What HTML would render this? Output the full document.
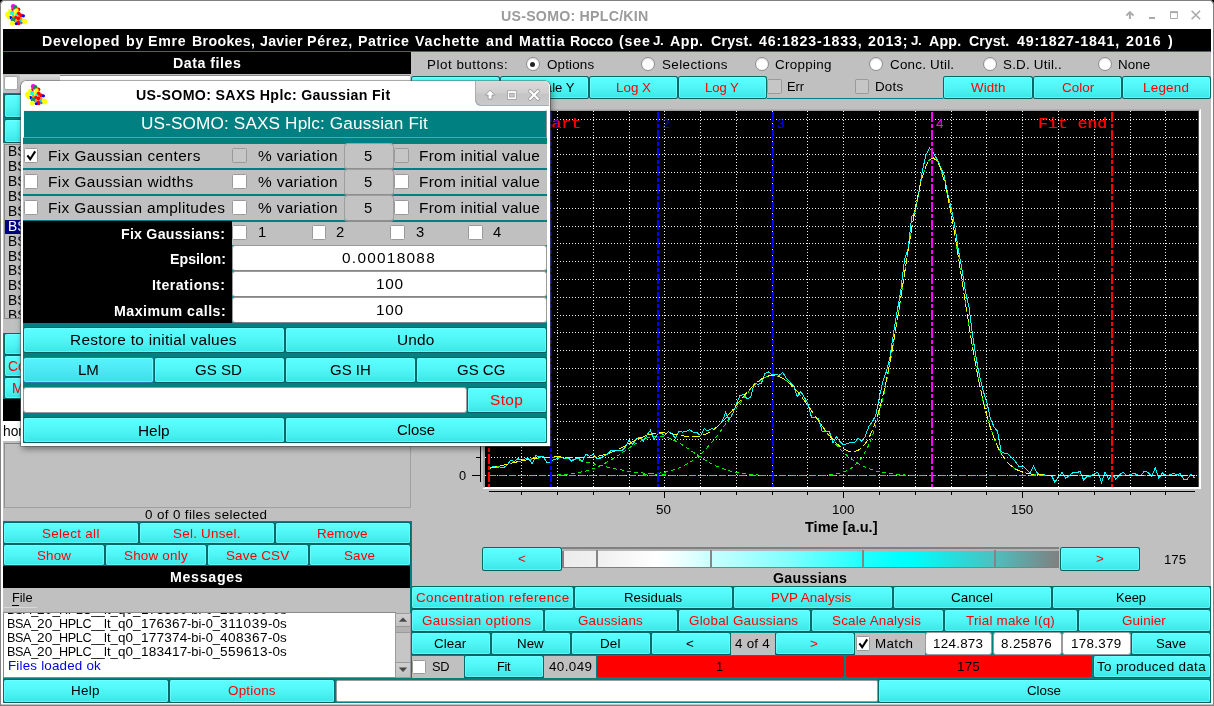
<!DOCTYPE html><html><head><meta charset="utf-8"><title>US-SOMO</title><style>html,body{margin:0;padding:0;background:#000;}
body{width:1214px;height:706px;position:relative;overflow:hidden;font-family:"Liberation Sans",sans-serif;}
body div{position:absolute;box-sizing:border-box;}
.t{white-space:nowrap;will-change:transform;}
.b{background:linear-gradient(#5cffff 0%,#50f6f6 50%,#3ce6e6 100%);border:1px solid #006a6a;border-bottom:1.5px solid #005f5f;border-radius:2.5px;box-shadow:inset 0 0 0 1px rgba(130,255,255,.55);}
</style></head><body>
<div class="" style="left:0px;top:0px;width:1214px;height:706px;background:#fff;border-radius:5px 5px 0 0;box-shadow:inset 0 0 0 1px #808080, inset 0 -0.4px 0 1px #808080;"></div>
<div class="" style="left:3px;top:29px;width:1208px;height:673.8px;background:#008080;"></div>
<div class="t" style="left:500.82px;top:8px;height:16px;line-height:16px;font-size:14.20px;color:#9b9b9b;letter-spacing:0.24px;font-weight:bold;">US-SOMO: HPLC/KIN</div>
<div class="" style="left:3px;top:29px;width:1208px;height:22px;background:#000;"></div>
<div class="t" style="left:41.65px;top:33px;height:16px;line-height:16px;font-size:14.20px;color:#fff;letter-spacing:0.71px;font-weight:bold;">Developed</div>
<div class="t" style="left:125.98px;top:33px;height:16px;line-height:16px;font-size:14.20px;color:#fff;letter-spacing:0.76px;font-weight:bold;">by</div>
<div class="t" style="left:148.16px;top:33px;height:16px;line-height:16px;font-size:14.20px;color:#fff;letter-spacing:0.72px;font-weight:bold;">Emre</div>
<div class="t" style="left:191.76px;top:33px;height:16px;line-height:16px;font-size:14.20px;color:#fff;letter-spacing:0.32px;font-weight:bold;">Brookes,</div>
<div class="t" style="left:259.64px;top:33px;height:16px;line-height:16px;font-size:14.20px;color:#fff;letter-spacing:0.29px;font-weight:bold;">Javier</div>
<div class="t" style="left:306.75px;top:33px;height:16px;line-height:16px;font-size:14.20px;color:#fff;letter-spacing:0.69px;font-weight:bold;">Pérez,</div>
<div class="t" style="left:358.09px;top:33px;height:16px;line-height:16px;font-size:14.20px;color:#fff;letter-spacing:0.58px;font-weight:bold;">Patrice</div>
<div class="t" style="left:415.01px;top:33px;height:16px;line-height:16px;font-size:14.20px;color:#fff;letter-spacing:0.82px;font-weight:bold;">Vachette</div>
<div class="t" style="left:485.88px;top:33px;height:16px;line-height:16px;font-size:14.20px;color:#fff;letter-spacing:0.75px;font-weight:bold;">and</div>
<div class="t" style="left:518.86px;top:33px;height:16px;line-height:16px;font-size:14.20px;color:#fff;letter-spacing:0.91px;font-weight:bold;">Mattia</div>
<div class="t" style="left:570.30px;top:33px;height:16px;line-height:16px;font-size:14.17px;color:#fff;font-weight:bold;">Rocco</div>
<div class="t" style="left:619.41px;top:33px;height:16px;line-height:16px;font-size:14.20px;color:#fff;letter-spacing:0.82px;font-weight:bold;">(see</div>
<div class="t" style="left:653.14px;top:33px;height:15px;line-height:15px;font-size:13.40px;color:#fff;letter-spacing:-0.35px;font-weight:bold;">J.</div>
<div class="t" style="left:669.96px;top:33px;height:16px;line-height:16px;font-size:14.20px;color:#fff;letter-spacing:0.51px;font-weight:bold;">App.</div>
<div class="t" style="left:710.51px;top:33px;height:16px;line-height:16px;font-size:14.20px;color:#fff;letter-spacing:0.23px;font-weight:bold;">Cryst.</div>
<div class="t" style="left:759.03px;top:33px;height:16px;line-height:16px;font-size:14.20px;color:#fff;letter-spacing:0.86px;font-weight:bold;">46:1823-1833,</div>
<div class="t" style="left:868.10px;top:33px;height:16px;line-height:16px;font-size:14.20px;color:#fff;letter-spacing:0.80px;font-weight:bold;">2013;</div>
<div class="t" style="left:910.89px;top:33px;height:15px;line-height:15px;font-size:13.40px;color:#fff;letter-spacing:-0.35px;font-weight:bold;">J.</div>
<div class="t" style="left:928.51px;top:33px;height:16px;line-height:16px;font-size:14.20px;color:#fff;letter-spacing:0.21px;font-weight:bold;">App.</div>
<div class="t" style="left:968.90px;top:33px;height:16px;line-height:16px;font-size:14.20px;color:#fff;font-weight:bold;">Cryst.</div>
<div class="t" style="left:1017.41px;top:33px;height:16px;line-height:16px;font-size:14.20px;color:#fff;letter-spacing:0.82px;font-weight:bold;">49:1827-1841,</div>
<div class="t" style="left:1126.00px;top:33px;height:16px;line-height:16px;font-size:14.20px;color:#fff;letter-spacing:1.00px;font-weight:bold;">2016</div>
<div class="t" style="left:1167.84px;top:33px;height:16px;line-height:16px;font-size:14.20px;color:#fff;letter-spacing:0.47px;font-weight:bold;">)</div>
<div class="" style="left:3px;top:52px;width:408px;height:22px;background:#000;"></div>
<div class="t" style="left:172.56px;top:55px;height:16px;line-height:16px;font-size:14.20px;color:#fff;letter-spacing:0.53px;font-weight:bold;">Data files</div>
<div class="" style="left:3px;top:74px;width:408.5px;height:447px;background:#c0c0c0;"></div>
<div class="" style="left:3.6px;top:76.2px;width:14px;height:14.1px;background:#fff;border:1px solid #a8a8a8;box-sizing:border-box;border-radius:2px;"></div>
<div class="" style="left:20px;top:75px;width:40px;height:22px;background:linear-gradient(#d8d8d8,#b0b0b0);"></div>
<div class="" style="left:60px;top:75px;width:350px;height:22px;background:#fff;border-top:1px solid #888;"></div>
<div class="" style="left:3px;top:93.4px;width:137px;height:50px;background:#008080;"></div>
<div class="b" style="left:3.5px;top:94px;width:136.5px;height:23.6px;"></div>
<div class="b" style="left:3.5px;top:118.7px;width:136.5px;height:24px;"></div>
<div class="" style="left:3.5px;top:144px;width:406.5px;height:174.5px;background:#c0c0c0;border:1px solid #8a8a8a;box-sizing:border-box;"></div>
<div style="left:4.5px;top:145px;width:400px;height:172.5px;overflow:hidden;">
<div class="t" style="left:3.00px;top:-1px;height:15px;line-height:15px;font-size:13.80px;color:#000;">BSA</div>
<div class="t" style="left:3.00px;top:14px;height:15px;line-height:15px;font-size:13.80px;color:#000;">BSA</div>
<div class="t" style="left:3.00px;top:29px;height:15px;line-height:15px;font-size:13.80px;color:#000;">BSA</div>
<div class="t" style="left:3.00px;top:44px;height:15px;line-height:15px;font-size:13.80px;color:#000;">BSA</div>
<div class="t" style="left:3.00px;top:59px;height:15px;line-height:15px;font-size:13.80px;color:#000;">BSA</div>
<div class="" style="left:0px;top:74.5px;width:396px;height:14.2px;background:#000080;"></div>
<div class="t" style="left:3.00px;top:74px;height:15px;line-height:15px;font-size:13.80px;color:#fff;">BSA</div>
<div class="t" style="left:3.00px;top:89px;height:15px;line-height:15px;font-size:13.80px;color:#000;">BSA</div>
<div class="t" style="left:3.00px;top:104px;height:15px;line-height:15px;font-size:13.80px;color:#000;">BSA</div>
<div class="t" style="left:3.00px;top:118px;height:15px;line-height:15px;font-size:13.80px;color:#000;">BSA</div>
<div class="t" style="left:3.00px;top:133px;height:15px;line-height:15px;font-size:13.80px;color:#000;">BSA</div>
<div class="t" style="left:3.00px;top:148px;height:15px;line-height:15px;font-size:13.80px;color:#000;">BSA</div>
<div class="t" style="left:3.00px;top:163px;height:15px;line-height:15px;font-size:13.80px;color:#000;">BSA</div>
</div>
<div class="" style="left:4px;top:320px;width:406px;height:12px;background:#c0c0c0;"></div>
<div class="" style="left:3px;top:332.5px;width:137px;height:67px;background:#008080;"></div>
<div class="b" style="left:3.5px;top:333px;width:136.5px;height:22px;"></div>
<div class="b" style="left:3.5px;top:355px;width:136.5px;height:22px;"></div>
<div class="t" style="left:7.50px;top:359px;height:15px;line-height:15px;font-size:13.80px;color:#ff0000;">Co</div>
<div class="b" style="left:3.5px;top:377px;width:136.5px;height:22px;"></div>
<div class="t" style="left:12.30px;top:381px;height:15px;line-height:15px;font-size:13.80px;color:#ff0000;">M</div>
<div class="" style="left:3px;top:399px;width:408px;height:22px;background:#000;"></div>
<div class="" style="left:3px;top:421px;width:408px;height:20px;background:#fff;"></div>
<div class="t" style="left:2.60px;top:424px;height:15px;line-height:15px;font-size:13.80px;color:#000;">hor</div>
<div class="" style="left:3px;top:441px;width:408.5px;height:80px;background:#c0c0c0;"></div>
<div class="" style="left:4px;top:443px;width:407px;height:65px;background:#c0c0c0;border:1px solid #a0a0a0;border-top-color:#808080;border-left-color:#909090;box-sizing:border-box;"></div>
<div class="t" style="left:145.48px;top:507px;height:15px;line-height:15px;font-size:13.40px;color:#000;letter-spacing:0.37px;">0 of 0 files selected</div>
<div class="" style="left:3px;top:521px;width:407px;height:46px;background:#008080;"></div>
<div class="b" style="left:3.4px;top:522px;width:135.6px;height:22px;"></div>
<div class="t" style="left:42.17px;top:526px;height:15px;line-height:15px;font-size:13.40px;color:#ff0000;letter-spacing:0.34px;">Select all</div>
<div class="b" style="left:139px;top:522px;width:136px;height:22px;"></div>
<div class="t" style="left:173.43px;top:526px;height:15px;line-height:15px;font-size:13.40px;color:#ff0000;letter-spacing:0.26px;">Sel. Unsel.</div>
<div class="b" style="left:275px;top:522px;width:136px;height:22px;"></div>
<div class="t" style="left:316.96px;top:526px;height:15px;line-height:15px;font-size:13.40px;color:#ff0000;letter-spacing:0.12px;">Remove</div>
<div class="b" style="left:3.4px;top:544px;width:101.6px;height:22px;"></div>
<div class="t" style="left:36.99px;top:548px;height:15px;line-height:15px;font-size:13.40px;color:#ff0000;letter-spacing:0.17px;">Show</div>
<div class="b" style="left:105px;top:544px;width:102px;height:22px;"></div>
<div class="t" style="left:124.22px;top:548px;height:15px;line-height:15px;font-size:13.40px;color:#ff0000;letter-spacing:0.23px;">Show only</div>
<div class="b" style="left:207px;top:544px;width:102px;height:22px;"></div>
<div class="t" style="left:226.39px;top:548px;height:15px;line-height:15px;font-size:13.40px;color:#ff0000;letter-spacing:0.19px;">Save CSV</div>
<div class="b" style="left:309px;top:544px;width:102px;height:22px;"></div>
<div class="t" style="left:344.37px;top:548px;height:15px;line-height:15px;font-size:13.40px;color:#ff0000;letter-spacing:0.14px;">Save</div>
<div class="" style="left:3px;top:566px;width:407px;height:22px;background:#000;"></div>
<div class="t" style="left:170.25px;top:569px;height:16px;line-height:16px;font-size:14.20px;color:#fff;letter-spacing:0.70px;font-weight:bold;">Messages</div>
<div class="" style="left:3px;top:588px;width:407px;height:24.5px;background:#c0c0c0;"></div>
<div class="t" style="left:11.98px;top:590px;height:15px;line-height:15px;font-size:12.80px;color:#000;letter-spacing:-0.03px;text-decoration:none;">File</div>
<div class="" style="left:12px;top:605px;width:7px;height:1px;background:#000;"></div>
<div class="" style="left:4px;top:606.5px;width:33px;height:1px;background:#d8d8d8;"></div>
<div class="" style="left:3px;top:612px;width:393px;height:66px;background:#fff;border:1px solid #8a8a8a;box-sizing:border-box;overflow:hidden;"></div>
<div style="position:absolute;left:4px;top:613px;width:391px;height:64px;overflow:hidden;">
<div class="t" style="left:3.17px;top:-10px;height:14px;line-height:14px;font-size:12.60px;color:#000;letter-spacing:-0.35px;">BSA_</div>
<div class="t" style="left:33.22px;top:-11px;height:15px;line-height:15px;font-size:13.60px;color:#000;letter-spacing:0.24px;">20_</div>
<div class="t" style="left:55.46px;top:-10px;height:14px;line-height:14px;font-size:12.60px;color:#000;letter-spacing:-0.35px;">HPLC__</div>
<div class="t" style="left:100.30px;top:-11px;height:15px;line-height:15px;font-size:13.07px;color:#000;">lt_</div>
<div class="t" style="left:114.10px;top:-11px;height:15px;line-height:15px;font-size:13.43px;color:#000;">q0_</div>
<div class="t" style="left:136.59px;top:-11px;height:15px;line-height:15px;font-size:13.60px;color:#000;letter-spacing:0.19px;">175360</div>
<div class="t" style="left:183.00px;top:-11px;height:15px;line-height:15px;font-size:12.91px;color:#000;">-bi-0_</div>
<div class="t" style="left:216.23px;top:-11px;height:15px;line-height:15px;font-size:13.60px;color:#000;letter-spacing:0.45px;">286460</div>
<div class="t" style="left:264.10px;top:-11px;height:15px;line-height:15px;font-size:13.46px;color:#000;">-0s</div>
<div class="t" style="left:3.17px;top:4px;height:14px;line-height:14px;font-size:12.60px;color:#000;letter-spacing:-0.35px;">BSA_</div>
<div class="t" style="left:33.22px;top:3px;height:15px;line-height:15px;font-size:13.60px;color:#000;letter-spacing:0.24px;">20_</div>
<div class="t" style="left:55.46px;top:4px;height:14px;line-height:14px;font-size:12.60px;color:#000;letter-spacing:-0.35px;">HPLC__</div>
<div class="t" style="left:100.30px;top:3px;height:15px;line-height:15px;font-size:13.07px;color:#000;">lt_</div>
<div class="t" style="left:114.10px;top:3px;height:15px;line-height:15px;font-size:13.43px;color:#000;">q0_</div>
<div class="t" style="left:136.59px;top:3px;height:15px;line-height:15px;font-size:13.60px;color:#000;letter-spacing:0.19px;">176367</div>
<div class="t" style="left:183.00px;top:3px;height:15px;line-height:15px;font-size:12.91px;color:#000;">-bi-0_</div>
<div class="t" style="left:216.31px;top:3px;height:15px;line-height:15px;font-size:13.60px;color:#000;letter-spacing:0.62px;">311039</div>
<div class="t" style="left:264.10px;top:3px;height:15px;line-height:15px;font-size:13.46px;color:#000;">-0s</div>
<div class="t" style="left:3.17px;top:18px;height:14px;line-height:14px;font-size:12.60px;color:#000;letter-spacing:-0.35px;">BSA_</div>
<div class="t" style="left:33.22px;top:17px;height:15px;line-height:15px;font-size:13.60px;color:#000;letter-spacing:0.24px;">20_</div>
<div class="t" style="left:55.46px;top:18px;height:14px;line-height:14px;font-size:12.60px;color:#000;letter-spacing:-0.35px;">HPLC__</div>
<div class="t" style="left:100.30px;top:17px;height:15px;line-height:15px;font-size:13.07px;color:#000;">lt_</div>
<div class="t" style="left:114.10px;top:17px;height:15px;line-height:15px;font-size:13.43px;color:#000;">q0_</div>
<div class="t" style="left:136.59px;top:17px;height:15px;line-height:15px;font-size:13.60px;color:#000;letter-spacing:0.19px;">177374</div>
<div class="t" style="left:183.00px;top:17px;height:15px;line-height:15px;font-size:12.91px;color:#000;">-bi-0_</div>
<div class="t" style="left:216.23px;top:17px;height:15px;line-height:15px;font-size:13.60px;color:#000;letter-spacing:0.45px;">408367</div>
<div class="t" style="left:264.10px;top:17px;height:15px;line-height:15px;font-size:13.46px;color:#000;">-0s</div>
<div class="t" style="left:3.17px;top:32px;height:14px;line-height:14px;font-size:12.60px;color:#000;letter-spacing:-0.35px;">BSA_</div>
<div class="t" style="left:33.22px;top:31px;height:15px;line-height:15px;font-size:13.60px;color:#000;letter-spacing:0.24px;">20_</div>
<div class="t" style="left:55.46px;top:32px;height:14px;line-height:14px;font-size:12.60px;color:#000;letter-spacing:-0.35px;">HPLC__</div>
<div class="t" style="left:100.30px;top:31px;height:15px;line-height:15px;font-size:13.07px;color:#000;">lt_</div>
<div class="t" style="left:114.10px;top:31px;height:15px;line-height:15px;font-size:13.43px;color:#000;">q0_</div>
<div class="t" style="left:136.59px;top:31px;height:15px;line-height:15px;font-size:13.60px;color:#000;letter-spacing:0.19px;">183417</div>
<div class="t" style="left:183.00px;top:31px;height:15px;line-height:15px;font-size:12.91px;color:#000;">-bi-0_</div>
<div class="t" style="left:216.23px;top:31px;height:15px;line-height:15px;font-size:13.60px;color:#000;letter-spacing:0.45px;">559613</div>
<div class="t" style="left:264.10px;top:31px;height:15px;line-height:15px;font-size:13.46px;color:#000;">-0s</div>
<div class="t" style="left:4.00px;top:45px;height:15px;line-height:15px;font-size:13.40px;color:#0000e0;letter-spacing:0.19px;">Files loaded ok</div>
</div>
<div class="" style="left:395.2px;top:612.5px;width:15.6px;height:65.1px;background:#c6c6c6;border-left:1px solid #9a9a9a;border-right:1px solid #9a9a9a;box-sizing:border-box;"></div>
<div class="" style="left:395.2px;top:612.5px;width:15.6px;height:14.7px;background:linear-gradient(#cfcfcf,#c2c2c2);border:1px solid #9a9a9a;box-sizing:border-box;"></div>
<div class="" style="left:395.2px;top:662.2px;width:15.6px;height:15.4px;background:linear-gradient(#cfcfcf,#c2c2c2);border:1px solid #9a9a9a;box-sizing:border-box;"></div>
<div class="" style="left:396px;top:627.4px;width:14px;height:6px;background:#b2b2b2;border-bottom:1px solid #9a9a9a;box-sizing:border-box;"></div>
<svg style="position:absolute;left:395px;top:612px" width="16" height="66"><path d="M3.8 9.8 L8 5.4 L12.2 9.8Z" fill="#484848"/><path d="M3.8 55.5 L8 60 L12.2 55.5Z" fill="#484848"/></svg>
<div class="" style="left:411px;top:586px;width:800px;height:117px;background:#008080;"></div>
<div class="b" style="left:3px;top:679px;width:166px;height:23.8px;"></div>
<div class="t" style="left:71.24px;top:683px;height:15px;line-height:15px;font-size:13.40px;color:#000;letter-spacing:0.29px;">Help</div>
<div class="b" style="left:169px;top:679px;width:166px;height:23.8px;"></div>
<div class="t" style="left:227.52px;top:683px;height:15px;line-height:15px;font-size:13.40px;color:#ff0000;letter-spacing:0.23px;">Options</div>
<div class="" style="left:335.5px;top:679.5px;width:542px;height:22.8px;background:#fff;border:1px solid #9a9a9a;box-sizing:border-box;border-radius:2px;"></div>
<div class="b" style="left:878px;top:679px;width:333px;height:23.8px;"></div>
<div class="t" style="left:1027.30px;top:683px;height:15px;line-height:15px;font-size:13.30px;color:#000;">Close</div>
<div class="" style="left:411px;top:52px;width:800px;height:24px;background:#c0c0c0;"></div>
<div class="t" style="left:427.26px;top:57px;height:15px;line-height:15px;font-size:13.40px;color:#000;letter-spacing:0.52px;">Plot buttons:</div>
<div class="" style="left:525.7px;top:57px;width:14px;height:14px;border-radius:50%;background:#fff;border:1px solid #8c8c8c;box-sizing:border-box;box-shadow:inset 0 1px 1px rgba(0,0,0,.15);"><div style="position:absolute;left:3.5px;top:3.5px;width:5px;height:5px;border-radius:50%;background:#222"></div></div>
<div class="t" style="left:546.78px;top:57px;height:15px;line-height:15px;font-size:13.40px;color:#000;letter-spacing:0.16px;">Options</div>
<div class="" style="left:640.8px;top:57px;width:14px;height:14px;border-radius:50%;background:#fff;border:1px solid #8c8c8c;box-sizing:border-box;box-shadow:inset 0 1px 1px rgba(0,0,0,.15);"></div>
<div class="t" style="left:661.51px;top:57px;height:15px;line-height:15px;font-size:13.40px;color:#000;letter-spacing:0.42px;">Selections</div>
<div class="" style="left:754.8px;top:57px;width:14px;height:14px;border-radius:50%;background:#fff;border:1px solid #8c8c8c;box-sizing:border-box;box-shadow:inset 0 1px 1px rgba(0,0,0,.15);"></div>
<div class="t" style="left:775.45px;top:57px;height:15px;line-height:15px;font-size:13.40px;color:#000;letter-spacing:0.29px;">Cropping</div>
<div class="" style="left:868.7px;top:57px;width:14px;height:14px;border-radius:50%;background:#fff;border:1px solid #8c8c8c;box-sizing:border-box;box-shadow:inset 0 1px 1px rgba(0,0,0,.15);"></div>
<div class="t" style="left:889.81px;top:57px;height:15px;line-height:15px;font-size:13.40px;color:#000;letter-spacing:0.23px;">Conc. Util.</div>
<div class="" style="left:982.7px;top:57px;width:14px;height:14px;border-radius:50%;background:#fff;border:1px solid #8c8c8c;box-sizing:border-box;box-shadow:inset 0 1px 1px rgba(0,0,0,.15);"></div>
<div class="t" style="left:1003.41px;top:57px;height:15px;line-height:15px;font-size:13.40px;color:#000;letter-spacing:0.22px;">S.D. Util..</div>
<div class="" style="left:1097.7px;top:57px;width:14px;height:14px;border-radius:50%;background:#fff;border:1px solid #8c8c8c;box-sizing:border-box;box-shadow:inset 0 1px 1px rgba(0,0,0,.15);"></div>
<div class="t" style="left:1118.35px;top:57px;height:15px;line-height:15px;font-size:13.40px;color:#000;letter-spacing:0.09px;">None</div>
<div class="" style="left:411.5px;top:76px;width:799.5px;height:23px;background:#c0c0c0;"></div>
<div class="b" style="left:411px;top:76px;width:89px;height:23px;"></div>
<div class="b" style="left:500px;top:76px;width:89px;height:23px;"></div>
<div class="t" style="left:514.50px;top:80px;height:15px;line-height:15px;font-size:13.12px;color:#000;">Rescale Y</div>
<div class="b" style="left:589px;top:76px;width:89px;height:23px;"></div>
<div class="t" style="left:616.00px;top:80px;height:15px;line-height:15px;font-size:13.39px;color:#ff0000;">Log X</div>
<div class="b" style="left:678px;top:76px;width:89px;height:23px;"></div>
<div class="t" style="left:705.00px;top:80px;height:15px;line-height:15px;font-size:13.01px;color:#ff0000;">Log Y</div>
<div class="" style="left:767.3px;top:79.3px;width:14.4px;height:14.4px;background:#c6c6c6;border:1px solid #9a9a9a;box-sizing:border-box;border-radius:1.5px;"></div>
<div class="t" style="left:787.29px;top:79px;height:15px;line-height:15px;font-size:12.80px;color:#000;letter-spacing:-0.02px;">Err</div>
<div class="" style="left:855px;top:79.3px;width:14.4px;height:14.4px;background:#c6c6c6;border:1px solid #9a9a9a;box-sizing:border-box;border-radius:1.5px;"></div>
<div class="t" style="left:875.09px;top:79px;height:15px;line-height:15px;font-size:13.40px;color:#000;letter-spacing:0.19px;">Dots</div>
<div class="b" style="left:943px;top:76px;width:90px;height:23px;"></div>
<div class="t" style="left:970.91px;top:80px;height:15px;line-height:15px;font-size:13.40px;color:#ff0000;letter-spacing:0.03px;">Width</div>
<div class="b" style="left:1033px;top:76px;width:89px;height:23px;"></div>
<div class="t" style="left:1061.52px;top:80px;height:15px;line-height:15px;font-size:13.40px;color:#ff0000;letter-spacing:0.04px;">Color</div>
<div class="b" style="left:1122px;top:76px;width:89px;height:23px;"></div>
<div class="t" style="left:1143.43px;top:80px;height:15px;line-height:15px;font-size:13.40px;color:#ff0000;letter-spacing:0.26px;">Legend</div>
<div class="" style="left:411.5px;top:99px;width:799.5px;height:487px;background:#c0c0c0;"></div>
<div class="" style="left:767px;top:97.5px;width:176px;height:1px;background:#008080;"></div>
<svg style="position:absolute;left:0;top:0" width="1214" height="706" viewBox="0 0 1214 706"><rect x="483" y="109.2" width="718" height="379.8" fill="#fff"/><rect x="483" y="109.2" width="716.5" height="1.8" fill="#a0a0a0"/><rect x="483" y="109.2" width="2" height="378.3" fill="#a0a0a0"/><rect x="485" y="111" width="713.7" height="376" fill="#000"/><clipPath id="cp"><rect x="485" y="111" width="713.7" height="376"/></clipPath><g clip-path="url(#cp)"><path d="M521.5 111V487 M557.5 111V487 M593.5 111V487 M629.5 111V487 M664.5 111V487 M700.5 111V487 M736.5 111V487 M772.5 111V487 M807.5 111V487 M843.5 111V487 M879.5 111V487 M915.5 111V487 M951.5 111V487 M986.5 111V487 M1022.5 111V487 M1058.5 111V487 M1094.5 111V487 M1130.5 111V487 M1165.5 111V487 M485 475.5H1198.7 M485 457.5H1198.7 M485 439.5H1198.7 M485 421.5H1198.7 M485 404.5H1198.7 M485 386.5H1198.7 M485 368.5H1198.7 M485 350.5H1198.7 M485 332.5H1198.7 M485 315.5H1198.7 M485 297.5H1198.7 M485 279.5H1198.7 M485 261.5H1198.7 M485 243.5H1198.7 M485 226.5H1198.7 M485 208.5H1198.7 M485 190.5H1198.7 M485 172.5H1198.7 M485 154.5H1198.7 M485 137.5H1198.7 M485 119.5H1198.7" stroke="#f2f2f2" stroke-width="1" stroke-dasharray="1 2" fill="none" shape-rendering="crispEdges"/><path d="M489.3 475.3H1194.5" stroke="#00ff00" stroke-width="1" stroke-dasharray="7 3" fill="none" shape-rendering="crispEdges"/><path d="M489.3 468.4 L492.9 467.6 L496.4 466.8 L500.0 466.0 L503.6 465.1 L507.2 464.3 L510.8 463.4 L514.3 462.5 L517.9 461.7 L521.5 460.9 L525.1 460.2 L528.7 459.5 L532.2 458.9 L535.8 458.4 L539.4 458.0 L543.0 457.6 L546.6 457.4 L550.1 457.3 L553.7 457.3 L557.3 457.5 L560.9 457.7 L564.5 458.1 L568.0 458.5 L571.6 459.1 L575.2 459.7 L578.8 460.4 L582.4 461.2 L585.9 462.0 L589.5 462.8 L593.1 463.7 L596.7 464.5 L600.3 465.4 L603.8 466.3 L607.4 467.1 L611.0 467.9 L614.8 468.7 L618.4 469.4 L622.0 470.1 L625.6 470.7 L629.1 471.3 L632.7 471.8 L636.3 472.3 L639.9 472.7 L643.5 473.1 L646.8 473.5 L650.4 473.7 L654.0 474.0 L657.5 474.2 L661.1 474.4 L664.7 474.6 L668.3 474.7" stroke="#00ee00" stroke-width="1" stroke-dasharray="4 3" fill="none" shape-rendering="crispEdges"/><path d="M557.3 474.8 L560.9 474.6 L564.5 474.3 L568.0 474.0 L571.6 473.6 L575.2 473.2 L578.8 472.6 L582.4 471.8 L585.9 471.0 L589.5 469.9 L593.1 468.7 L596.7 467.3 L600.3 465.8 L603.8 464.0 L607.4 462.0 L611.0 459.9 L614.8 457.7 L618.4 455.3 L622.0 452.9 L625.6 450.4 L629.1 447.9 L632.7 445.6 L636.3 443.4 L639.9 441.4 L643.5 439.6 L646.8 438.2 L650.4 437.1 L654.0 436.4 L657.5 436.1 L661.1 436.3 L664.7 436.9 L668.3 437.9 L671.9 439.2 L675.4 440.9 L679.0 442.8 L682.6 445.0 L686.2 447.3 L689.8 449.7 L693.3 452.2 L696.9 454.7 L700.5 457.1 L704.1 459.4 L707.7 461.5 L711.2 463.5 L714.8 465.3 L718.4 466.9 L722.0 468.4 L725.6 469.6 L729.1 470.7 L732.7 471.6 L736.3 472.4 L739.9 473.0 L743.5 473.5 L747.0 473.9 L750.6 474.3 L754.2 474.5 L757.8 474.7" stroke="#00ee00" stroke-width="1" stroke-dasharray="4 3" fill="none" shape-rendering="crispEdges"/><path d="M643.5 474.6 L646.8 474.4 L650.4 474.1 L654.0 473.8 L657.5 473.4 L661.1 472.8 L664.7 472.2 L668.3 471.4 L671.9 470.4 L675.4 469.3 L679.0 467.9 L682.6 466.4 L686.2 464.5 L689.8 462.4 L693.3 460.0 L696.9 457.3 L700.5 454.2 L704.1 450.8 L707.7 447.0 L711.2 443.0 L714.8 438.6 L718.4 434.0 L722.0 429.1 L725.6 424.0 L729.1 418.8 L732.7 413.6 L736.3 408.3 L739.9 403.2 L743.5 398.3 L747.0 393.6 L750.6 389.3 L754.2 385.5 L757.8 382.2 L761.4 379.5 L764.9 377.5 L768.5 376.2 L772.1 375.6 L775.7 375.8 L779.3 376.8 L782.8 378.4 L786.4 380.8 L790.0 383.7 L793.6 387.3 L797.2 391.4 L800.7 395.8 L804.3 400.6 L807.9 405.7 L811.5 410.9 L815.1 416.1 L818.6 421.3 L822.2 426.5 L825.8 431.5 L829.4 436.2 L833.0 440.7 L836.5 445.0 L840.1 448.9 L843.7 452.5 L847.3 455.7 L850.9 458.6 L854.4 461.2 L858.0 463.5 L861.6 465.4 L865.2 467.2 L868.8 468.6 L872.3 469.9 L875.9 470.9 L879.5 471.8 L883.1 472.5 L886.7 473.1 L890.2 473.6 L893.8 474.0 L897.4 474.3 L901.0 474.5 L904.6 474.7" stroke="#00ee00" stroke-width="1" stroke-dasharray="4 3" fill="none" shape-rendering="crispEdges"/><path d="M829.4 474.6 L833.0 474.2 L836.5 473.7 L840.1 473.0 L843.7 471.9 L847.3 470.4 L850.9 468.4 L854.4 465.8 L858.0 462.3 L861.6 457.7 L865.2 452.0 L868.8 444.8 L872.3 435.9 L875.9 425.2 L879.5 412.6 L883.1 397.8 L886.7 381.1 L890.2 362.3 L893.8 341.8 L897.4 319.9 L901.0 297.0 L904.6 273.7 L908.1 250.7 L911.7 228.7 L915.3 208.5 L918.9 190.8 L922.5 176.4 L926.0 165.8 L929.6 159.6 L933.2 157.8 L936.8 160.7 L940.4 168.1 L943.9 179.7 L947.5 195.1 L951.1 213.4 L954.7 234.2 L958.3 256.5 L961.8 279.6 L965.4 302.9 L969.0 325.6 L972.6 347.2 L976.2 367.3 L979.7 385.5 L983.3 401.8 L986.9 416.0 L990.5 428.1 L994.1 438.3 L997.6 446.7 L1001.2 453.6 L1004.8 459.0 L1008.4 463.3 L1012.0 466.5 L1015.5 469.0 L1019.1 470.8 L1022.7 472.2 L1026.3 473.2 L1029.9 473.9 L1033.4 474.3 L1037.0 474.7" stroke="#00ee00" stroke-width="1" stroke-dasharray="4 3" fill="none" shape-rendering="crispEdges"/><path d="M489.3 469.1 L492.9 466.2 L496.4 467.5 L500.0 466.9 L503.6 467.7 L507.2 464.8 L510.8 460.3 L514.3 461.3 L517.9 458.8 L521.5 460.2 L525.1 459.0 L528.7 458.9 L532.2 463.6 L535.8 455.9 L539.4 456.4 L543.0 456.1 L546.6 462.1 L550.1 462.1 L553.7 459.7 L557.3 458.7 L560.9 456.9 L564.5 458.5 L568.0 457.4 L571.6 461.2 L575.2 458.8 L578.8 458.5 L582.4 461.2 L585.9 453.9 L589.5 456.6 L593.1 454.1 L596.7 458.6 L600.3 458.1 L603.8 456.0 L607.4 454.1 L611.0 450.7 L614.8 450.3 L618.4 450.6 L622.0 450.3 L625.6 447.2 L629.1 440.1 L632.7 444.2 L636.3 439.2 L639.9 437.0 L643.5 441.3 L646.8 435.3 L650.4 430.3 L654.0 439.8 L657.5 434.1 L661.1 433.2 L664.7 435.4 L668.3 431.5 L671.9 433.6 L675.4 438.3 L679.0 431.5 L682.6 432.2 L686.2 431.3 L689.8 429.6 L693.3 432.4 L696.9 432.3 L700.5 435.7 L704.1 428.6 L707.7 430.9 L711.2 428.7 L714.8 429.2 L718.4 425.9 L722.0 421.7 L725.6 412.6 L729.1 419.8 L732.7 414.0 L736.3 404.2 L739.9 395.7 L743.5 394.4 L747.0 398.8 L750.6 397.2 L754.2 383.4 L757.8 384.3 L761.4 383.2 L764.9 373.6 L768.5 372.0 L772.1 374.9 L775.7 374.8 L779.3 375.1 L782.8 372.6 L786.4 378.5 L790.0 381.8 L793.6 385.3 L797.2 396.8 L800.7 391.3 L804.3 397.3 L807.9 403.8 L811.5 417.3 L815.1 417.9 L818.6 418.3 L822.2 431.7 L825.8 431.2 L829.4 431.7 L833.0 442.5 L836.5 436.6 L840.1 441.8 L843.7 444.9 L847.3 443.7 L850.9 442.3 L854.4 442.8 L858.0 438.1 L861.6 441.0 L865.2 436.5 L868.8 426.4 L872.3 421.9 L875.9 415.0 L879.5 396.6 L883.1 380.2 L886.7 370.6 L890.2 356.0 L893.8 331.2 L897.4 310.1 L901.0 288.9 L904.6 258.8 L908.1 248.9 L911.7 216.7 L915.3 211.2 L918.9 192.4 L922.5 170.3 L926.0 154.6 L929.6 148.3 L933.2 152.5 L936.8 159.0 L940.4 166.4 L943.9 174.7 L947.5 193.1 L951.1 207.8 L954.7 225.7 L958.3 249.7 L961.8 268.1 L965.4 291.4 L969.0 307.3 L972.6 335.7 L976.2 358.4 L979.7 376.3 L983.3 391.3 L986.9 402.4 L990.5 418.9 L994.1 427.0 L997.6 431.4 L1001.2 451.6 L1004.8 453.2 L1008.4 454.2 L1012.0 457.9 L1015.5 461.8 L1019.1 466.6 L1022.7 466.0 L1026.3 469.0 L1029.9 472.8 L1033.4 466.0 L1037.0 472.5 L1040.6 475.6 L1044.2 474.8 L1047.8 475.4 L1051.3 475.2 L1054.9 482.4 L1058.5 476.5 L1062.1 472.5 L1065.7 478.4 L1069.2 475.5 L1072.8 472.7 L1076.4 473.0 L1080.0 471.3 L1083.6 479.8 L1087.1 476.2 L1090.7 476.2 L1094.3 473.6 L1097.9 472.4 L1101.5 482.5 L1105.0 472.4 L1108.6 479.2 L1112.2 473.5 L1115.8 479.3 L1119.4 474.8 L1122.9 472.1 L1126.5 475.7 L1130.1 474.8 L1133.7 473.2 L1137.3 474.9 L1140.8 475.5 L1144.4 471.2 L1148.0 472.5 L1151.6 476.1 L1155.2 468.0 L1158.7 478.4 L1162.3 472.9 L1165.9 476.0 L1169.5 474.9 L1173.1 473.4 L1176.6 474.7 L1180.2 473.6 L1183.8 479.4 L1187.4 479.3 L1191.0 473.7 L1194.5 477.9" stroke="#00ffff" stroke-width="1" fill="none" shape-rendering="crispEdges"/><path d="M489.3 468.4 L492.9 467.6 L496.4 466.8 L500.0 466.0 L503.6 465.1 L507.2 464.3 L510.8 463.4 L514.3 462.5 L517.9 461.7 L521.5 460.9 L525.1 460.1 L528.7 459.5 L532.2 458.8 L535.8 458.3 L539.4 457.9 L543.0 457.5 L546.6 457.2 L550.1 457.0 L553.7 457.0 L557.3 456.9 L560.9 457.0 L564.5 457.1 L568.0 457.3 L571.6 457.4 L575.2 457.6 L578.8 457.7 L582.4 457.7 L585.9 457.6 L589.5 457.4 L593.1 457.1 L596.7 456.6 L600.3 455.8 L603.8 454.9 L607.4 453.8 L611.0 452.5 L614.8 451.0 L618.4 449.3 L622.0 447.5 L625.6 445.6 L629.1 443.7 L632.7 441.8 L636.3 440.0 L639.9 438.3 L643.5 436.7 L646.8 435.4 L650.4 434.4 L654.0 433.6 L657.5 433.1 L661.1 432.9 L664.7 433.0 L668.3 433.3 L671.9 433.8 L675.4 434.5 L679.0 435.2 L682.6 435.8 L686.2 436.4 L689.8 436.7 L693.3 436.8 L696.9 436.5 L700.5 435.9 L704.1 434.8 L707.7 433.2 L711.2 431.2 L714.8 428.6 L718.4 425.6 L722.0 422.2 L725.6 418.3 L729.1 414.2 L732.7 409.9 L736.3 405.4 L739.9 400.9 L743.5 396.5 L747.0 392.3 L750.6 388.3 L754.2 384.7 L757.8 381.7 L761.4 379.1 L764.9 377.2 L768.5 376.0 L772.1 375.5 L775.7 375.7 L779.3 376.7 L782.8 378.4 L786.4 380.7 L790.0 383.7 L793.6 387.3 L797.2 391.3 L800.7 395.8 L804.3 400.6 L807.9 405.6 L811.5 410.8 L815.1 416.0 L818.6 421.1 L822.2 426.2 L825.8 431.0 L829.4 435.5 L833.0 439.7 L836.5 443.4 L840.1 446.5 L843.7 449.0 L847.3 450.8 L850.9 451.7 L854.4 451.7 L858.0 450.4 L861.6 447.9 L865.2 443.8 L868.8 438.1 L872.3 430.5 L875.9 420.8 L879.5 409.0 L883.1 395.0 L886.7 378.9 L890.2 360.6 L893.8 340.5 L897.4 318.9 L901.0 296.2 L904.6 273.1 L908.1 250.3 L911.7 228.4 L915.3 208.3 L918.9 190.7 L922.5 176.3 L926.0 165.7 L929.6 159.5 L933.2 157.8 L936.8 160.7 L940.4 168.1 L943.9 179.7 L947.5 195.0 L951.1 213.4 L954.7 234.2 L958.3 256.5 L961.8 279.6 L965.4 302.9 L969.0 325.6 L972.6 347.2 L976.2 367.3 L979.7 385.5 L983.3 401.8 L986.9 416.0 L990.5 428.1 L994.1 438.3 L997.6 446.7 L1001.2 453.6 L1004.8 459.0 L1008.4 463.3 L1012.0 466.5 L1015.5 469.0 L1019.1 470.8 L1022.7 472.2 L1026.3 473.2 L1029.9 473.9 L1033.4 474.3 L1037.0 474.7 L1040.6 474.9 L1044.2 475.0 L1047.8 475.1 L1051.3 475.2 L1054.9 475.2 L1058.5 475.3 L1062.1 475.3 L1065.7 475.3 L1069.2 475.3 L1072.8 475.3 L1076.4 475.3 L1080.0 475.3 L1083.6 475.3 L1087.1 475.3 L1090.7 475.3 L1094.3 475.3 L1097.9 475.3 L1101.5 475.3 L1105.0 475.3 L1108.6 475.3 L1112.2 475.3 L1115.8 475.3 L1119.4 475.3 L1122.9 475.3 L1126.5 475.3 L1130.1 475.3 L1133.7 475.3 L1137.3 475.3 L1140.8 475.3 L1144.4 475.3 L1148.0 475.3 L1151.6 475.3 L1155.2 475.3 L1158.7 475.3 L1162.3 475.3 L1165.9 475.3 L1169.5 475.3 L1173.1 475.3 L1176.6 475.3 L1180.2 475.3 L1183.8 475.3 L1187.4 475.3 L1191.0 475.3 L1194.5 475.3" stroke="#ffff00" stroke-width="1" stroke-dasharray="8 3" fill="none" shape-rendering="crispEdges"/><path d="M489 112V487" stroke="#ff0000" stroke-width="2" stroke-dasharray="10 2 4 2" fill="none" shape-rendering="crispEdges"/><path d="M1112 112V487" stroke="#ff0000" stroke-width="2" stroke-dasharray="10 2 4 2" fill="none" shape-rendering="crispEdges"/><path d="M551 112V487" stroke="#0000ff" stroke-width="2" stroke-dasharray="10 2 4 2" fill="none" shape-rendering="crispEdges"/><path d="M658 112V487" stroke="#0000ff" stroke-width="2" stroke-dasharray="10 2 4 2" fill="none" shape-rendering="crispEdges"/><path d="M773 112V487" stroke="#0000ff" stroke-width="2" stroke-dasharray="10 2 4 2" fill="none" shape-rendering="crispEdges"/><path d="M932 112V487" stroke="#ff00ff" stroke-width="2" stroke-dasharray="10 2 4 2" fill="none" shape-rendering="crispEdges"/></g><path d="M489 491.5H1194.5 M521.5 491.5V494.5 M557.5 491.5V494.5 M593.5 491.5V494.5 M629.5 491.5V494.5 M664.5 491.5V497.5 M700.5 491.5V494.5 M736.5 491.5V494.5 M772.5 491.5V494.5 M807.5 491.5V494.5 M843.5 491.5V497.5 M879.5 491.5V494.5 M915.5 491.5V494.5 M951.5 491.5V494.5 M986.5 491.5V494.5 M1022.5 491.5V497.5 M1058.5 491.5V494.5 M1094.5 491.5V494.5 M1130.5 491.5V494.5 M1165.5 491.5V494.5 M480.5 113V482 M472 475.5H480.5 M476 457.5H480.5 M476 439.5H480.5 M476 421.5H480.5 M476 404.5H480.5 M472 386.5H480.5 M476 368.5H480.5 M476 350.5H480.5 M476 332.5H480.5 M476 315.5H480.5 M472 297.5H480.5 M476 279.5H480.5 M476 261.5H480.5 M476 243.5H480.5 M476 226.5H480.5 M472 208.5H480.5 M476 190.5H480.5 M476 172.5H480.5 M476 154.5H480.5 M476 137.5H480.5 M472 119.5H480.5" stroke="#000" stroke-width="1" fill="none" shape-rendering="crispEdges"/></svg>
<div class="t" style="left:492.00px;top:116px;height:16px;line-height:16px;font-size:14.60px;color:#ff0000;transform:scaleX(1.129);transform-origin:0 0;font-family:'Liberation Mono',monospace;text-shadow:0.3px 0 0 #f00;">Fit start</div>
<div class="t" style="left:1038.20px;top:116px;height:16px;line-height:16px;font-size:14.60px;color:#ff0000;transform:scaleX(1.127);transform-origin:0 0;font-family:'Liberation Mono',monospace;text-shadow:0.3px 0 0 #f00;">Fit end</div>
<div class="t" style="left:661.70px;top:116px;height:15px;line-height:15px;font-size:13.50px;color:#0000ff;">2</div>
<div class="t" style="left:776.70px;top:116px;height:15px;line-height:15px;font-size:13.50px;color:#0000ff;">3</div>
<div class="t" style="left:935.80px;top:116px;height:15px;line-height:15px;font-size:13.50px;color:#ff00ff;">4</div>
<div class="t" style="left:553.40px;top:116px;height:15px;line-height:15px;font-size:13.50px;color:#0000ff;">1</div>
<div class="t" style="left:459.44px;top:468px;height:15px;line-height:15px;font-size:12.80px;color:#000;letter-spacing:-0.12px;">0</div>
<div class="t" style="left:656.40px;top:502px;height:15px;line-height:15px;font-size:13.40px;color:#000;">50</div>
<div class="t" style="left:831.94px;top:502px;height:15px;line-height:15px;font-size:13.40px;color:#000;letter-spacing:0.08px;">100</div>
<div class="t" style="left:1011.00px;top:502px;height:15px;line-height:15px;font-size:13.37px;color:#000;">150</div>
<div class="t" style="left:804.70px;top:519px;height:16px;line-height:16px;font-size:14.55px;color:#000;font-weight:bold;">Time [a.u.]</div>
<div class="b" style="left:482px;top:547px;width:80.2px;height:23.8px;"></div>
<div class="t" style="left:517.59px;top:551px;height:15px;line-height:15px;font-size:13.40px;color:#ff0000;letter-spacing:1.17px;">&lt;</div>
<div class="" style="left:562.4px;top:547.2px;width:496.6px;height:21.3px;background:linear-gradient(#808080 0,#808080 1.7px,#b4b4b4 1.7px,#b4b4b4 3.5px,#808080 3.5px);"></div>
<div class="" style="left:563.8px;top:550.7px;width:494.7px;height:16.1px;background:linear-gradient(90deg,#ececec 0.0%,#f0f0f0 6.9%,#f8f8f8 13.5%,#ffffff 18.8%,#ecffff 23.6%,#c8ffff 29.7%,#80ffff 45.4%,#24ffff 60.3%,#00ffff 68.0%,#00fcfc 71.0%,#28dcdc 79.1%,#4cc0c0 87.0%,#808080 100.0%);"></div>
<div class="" style="left:595.8px;top:549.8px;width:1.8px;height:17.2px;background:#858585;"></div>
<div class="" style="left:709.8px;top:549.8px;width:1.8px;height:17.2px;background:#858585;"></div>
<div class="" style="left:861.8px;top:549.8px;width:1.8px;height:17.2px;background:#858585;"></div>
<div class="" style="left:993.8px;top:549.8px;width:1.8px;height:17.2px;background:#858585;"></div>
<div class="b" style="left:1059.8px;top:547px;width:79.8px;height:23.8px;"></div>
<div class="t" style="left:1095.59px;top:551px;height:15px;line-height:15px;font-size:13.40px;color:#ff0000;letter-spacing:1.17px;">&gt;</div>
<div class="t" style="left:1164.40px;top:552px;height:15px;line-height:15px;font-size:13.25px;color:#000;">175</div>
<div class="t" style="left:773.14px;top:570px;height:16px;line-height:16px;font-size:14.20px;color:#000;letter-spacing:0.27px;font-weight:bold;">Gaussians</div>
<div class="b" style="left:411px;top:586px;width:163px;height:23px;"></div>
<div class="t" style="left:415.91px;top:590px;height:15px;line-height:15px;font-size:13.40px;color:#ff0000;letter-spacing:0.43px;">Concentration reference</div>
<div class="b" style="left:574px;top:586px;width:159px;height:23px;"></div>
<div class="t" style="left:624.00px;top:590px;height:15px;line-height:15px;font-size:13.28px;color:#000;">Residuals</div>
<div class="b" style="left:733px;top:586px;width:160px;height:23px;"></div>
<div class="t" style="left:771.04px;top:590px;height:15px;line-height:15px;font-size:13.40px;color:#ff0000;letter-spacing:0.07px;">PVP Analysis</div>
<div class="b" style="left:893px;top:586px;width:159px;height:23px;"></div>
<div class="t" style="left:951.32px;top:590px;height:15px;line-height:15px;font-size:13.40px;color:#000;letter-spacing:0.05px;">Cancel</div>
<div class="b" style="left:1052px;top:586px;width:159px;height:23px;"></div>
<div class="t" style="left:1115.70px;top:590px;height:15px;line-height:15px;font-size:12.85px;color:#000;">Keep</div>
<div class="b" style="left:411px;top:609px;width:133px;height:23px;"></div>
<div class="t" style="left:422.48px;top:613px;height:15px;line-height:15px;font-size:13.40px;color:#ff0000;letter-spacing:0.37px;">Gaussian options</div>
<div class="b" style="left:544px;top:609px;width:133.6px;height:23px;"></div>
<div class="t" style="left:578.39px;top:613px;height:15px;line-height:15px;font-size:13.40px;color:#ff0000;letter-spacing:0.19px;">Gaussians</div>
<div class="b" style="left:677.6px;top:609px;width:133.6px;height:23px;"></div>
<div class="t" style="left:689.11px;top:613px;height:15px;line-height:15px;font-size:13.40px;color:#ff0000;letter-spacing:0.22px;">Global Gaussians</div>
<div class="b" style="left:811.2px;top:609px;width:133.2px;height:23px;"></div>
<div class="t" style="left:832.40px;top:613px;height:15px;line-height:15px;font-size:13.40px;color:#ff0000;letter-spacing:0.20px;">Scale Analysis</div>
<div class="b" style="left:944.4px;top:609px;width:133.6px;height:23px;"></div>
<div class="t" style="left:965.80px;top:613px;height:15px;line-height:15px;font-size:13.40px;color:#ff0000;letter-spacing:0.21px;">Trial make I(q)</div>
<div class="b" style="left:1078px;top:609px;width:133px;height:23px;"></div>
<div class="t" style="left:1122.36px;top:613px;height:15px;line-height:15px;font-size:13.40px;color:#ff0000;letter-spacing:0.11px;">Guinier</div>
<div class="b" style="left:411px;top:632px;width:79.5px;height:23px;"></div>
<div class="t" style="left:434.34px;top:636px;height:15px;line-height:15px;font-size:13.40px;color:#000;letter-spacing:0.08px;">Clear</div>
<div class="b" style="left:490.5px;top:632px;width:80.5px;height:23px;"></div>
<div class="t" style="left:517.30px;top:636px;height:15px;line-height:15px;font-size:13.35px;color:#000;">New</div>
<div class="b" style="left:571px;top:632px;width:80px;height:23px;"></div>
<div class="t" style="left:600.10px;top:636px;height:15px;line-height:15px;font-size:13.40px;color:#000;letter-spacing:0.20px;">Del</div>
<div class="b" style="left:651px;top:632px;width:80px;height:23px;"></div>
<div class="t" style="left:686.09px;top:636px;height:15px;line-height:15px;font-size:13.40px;color:#000;letter-spacing:0.17px;">&lt;</div>
<div class="" style="left:731px;top:632.5px;width:43.5px;height:22px;background:#c0c0c0;"></div>
<div class="t" style="left:735.12px;top:636px;height:15px;line-height:15px;font-size:13.40px;color:#000;letter-spacing:0.25px;">4 of 4</div>
<div class="b" style="left:774.5px;top:632px;width:80.5px;height:23px;"></div>
<div class="t" style="left:809.59px;top:636px;height:15px;line-height:15px;font-size:13.40px;color:#ff0000;letter-spacing:1.17px;">&gt;</div>
<div class="" style="left:855px;top:632.5px;width:70px;height:22px;background:#c0c0c0;"></div>
<div class="" style="left:855.5px;top:636.2px;width:14.4px;height:14.4px;background:#fff;border:1px solid #9a9a9a;box-sizing:border-box;border-radius:1.5px;"><svg width="12.4" height="12.4" style="position:absolute;left:0;top:0" viewBox="0 0 12.4 12.4"><path d="M2.4 6.4 L5.2 10.2 L10.2 2.4" fill="none" stroke="#000" stroke-width="2.1"/></svg></div>
<div class="t" style="left:875.18px;top:636px;height:15px;line-height:15px;font-size:13.40px;color:#000;letter-spacing:0.36px;">Match</div>
<div class="" style="left:924.5px;top:631.9px;width:67.8px;height:23.1px;background:#fff;border:1px solid #9a9a9a;box-sizing:border-box;border-radius:3px;"></div>
<div class="t" style="left:933.13px;top:636px;height:15px;line-height:15px;font-size:13.40px;color:#000;letter-spacing:0.27px;">124.873</div>
<div class="" style="left:993px;top:631.9px;width:68.6px;height:23.1px;background:#fff;border:1px solid #9a9a9a;box-sizing:border-box;border-radius:3px;"></div>
<div class="t" style="left:1001.48px;top:636px;height:15px;line-height:15px;font-size:13.40px;color:#000;letter-spacing:0.37px;">8.25876</div>
<div class="" style="left:1062.2px;top:631.9px;width:68.8px;height:23.1px;background:#fff;border:1px solid #9a9a9a;box-sizing:border-box;border-radius:3px;"></div>
<div class="t" style="left:1070.85px;top:636px;height:15px;line-height:15px;font-size:13.40px;color:#000;letter-spacing:0.31px;">178.379</div>
<div class="b" style="left:1131px;top:632px;width:80px;height:23px;"></div>
<div class="t" style="left:1155.70px;top:636px;height:15px;line-height:15px;font-size:13.16px;color:#000;">Save</div>
<div class="" style="left:411.5px;top:655.5px;width:52.5px;height:22px;background:#c0c0c0;"></div>
<div class="" style="left:411.7px;top:659.7px;width:14.4px;height:14.4px;background:#fff;border:1px solid #9a9a9a;box-sizing:border-box;border-radius:1.5px;"></div>
<div class="t" style="left:431.58px;top:659px;height:15px;line-height:15px;font-size:12.80px;color:#000;letter-spacing:-0.24px;">SD</div>
<div class="b" style="left:464px;top:655px;width:80px;height:23px;"></div>
<div class="t" style="left:496.89px;top:659px;height:15px;line-height:15px;font-size:12.80px;color:#000;letter-spacing:-0.35px;">Fit</div>
<div class="" style="left:544px;top:655.5px;width:52px;height:22px;background:#c0c0c0;"></div>
<div class="t" style="left:548.50px;top:659px;height:15px;line-height:15px;font-size:13.40px;color:#000;letter-spacing:0.40px;">40.049</div>
<div class="" style="left:596.8px;top:655.7px;width:247.4px;height:21.4px;background:#ff0000;border-radius:2px;"></div>
<div class="t" style="left:716.44px;top:659px;height:15px;line-height:15px;font-size:12.80px;color:#000;letter-spacing:-0.12px;">1</div>
<div class="" style="left:845.5px;top:655.7px;width:246.5px;height:21.4px;background:#ff0000;border-radius:2px;"></div>
<div class="t" style="left:956.81px;top:659px;height:15px;line-height:15px;font-size:13.40px;color:#000;letter-spacing:0.21px;">175</div>
<div class="b" style="left:1092.5px;top:655px;width:118.5px;height:23px;"></div>
<div class="t" style="left:1096.87px;top:659px;height:15px;line-height:15px;font-size:13.40px;color:#000;letter-spacing:0.34px;">To produced data</div>
<div class="" style="left:20.5px;top:80.5px;width:529.1px;height:365px;background:#fff;border-radius:5px 5px 0 0;box-shadow:1.5px 3px 6px 0 rgba(0,0,0,.42), 0 0 0 0.6px #6a6a6a;"></div>
<div class="" style="left:475.2px;top:80.8px;width:74.1px;height:25.7px;background:linear-gradient(#dadada 0%,#cecece 48%,#c4c4c4 52%,#cbcbcb 100%);border-radius:0 5px 0 6px;box-shadow:inset 1px -1px 0 #adadad;"></div>
<svg style="position:absolute;left:470px;top:78px" width="84" height="34" viewBox="470 78 84 34">
<path d="M490.05 90.2L494.9 95H492V99.1H488.1V95H485.2Z" fill="#fff" stroke="#9a9a9a" stroke-width="0.9" stroke-linejoin="round"/>
<rect x="507.3" y="90.4" width="9.3" height="9.3" fill="#9a9a9a"/><rect x="508" y="91.1" width="7.9" height="7.9" fill="#fff"/><rect x="509.2" y="92.9" width="5.4" height="4.5" fill="#9a9a9a"/><rect x="509.9" y="93.6" width="4" height="3.1" fill="#c8c8c8"/>
<path d="M530 91L538 99M538 91L530 99" stroke="#9a9a9a" stroke-width="3.6" stroke-linecap="round"/>
<path d="M530 91L538 99M538 91L530 99" stroke="#fff" stroke-width="2.1" stroke-linecap="round"/></svg>
<div class="t" style="left:136.47px;top:87px;height:16px;line-height:16px;font-size:14.20px;color:#000;letter-spacing:0.34px;font-weight:bold;">US-SOMO: SAXS Hplc: Gaussian Fit</div>
<div class="" style="left:23px;top:110px;width:524px;height:333.3px;background:#008080;"></div>
<div class="" style="left:23.3px;top:109.8px;width:523.7px;height:28.4px;background:#008080;border-style:solid;border-width:1.2px 1.6px 1.6px 1.6px;border-color:#f4f4f4 #8e8e8e #8e8e8e #f4f4f4;box-sizing:border-box;"></div>
<div class="t" style="left:141.36px;top:113px;height:20px;line-height:20px;font-size:17.20px;color:#fff;letter-spacing:0.13px;">US-SOMO: SAXS Hplc: Gaussian Fit</div>
<div class="" style="left:23px;top:144.2px;width:524px;height:23.8px;background:#c0c0c0;"></div>
<div class="" style="left:23.5px;top:148.3px;width:14.4px;height:14.4px;background:#fff;border:1px solid #9a9a9a;box-sizing:border-box;border-radius:1.5px;"><svg width="12.4" height="12.4" style="position:absolute;left:0;top:0" viewBox="0 0 12.4 12.4"><path d="M2.4 6.4 L5.2 10.2 L10.2 2.4" fill="none" stroke="#000" stroke-width="2.1"/></svg></div>
<div class="t" style="left:48.10px;top:147px;height:17px;line-height:17px;font-size:15.40px;color:#000;letter-spacing:0.41px;">Fix Gaussian centers</div>
<div class="" style="left:232.2px;top:148.3px;width:14.4px;height:14.4px;background:#c6c6c6;border:1px solid #9a9a9a;box-sizing:border-box;border-radius:1.5px;"></div>
<div class="t" style="left:257.77px;top:147px;height:17px;line-height:17px;font-size:15.40px;color:#000;letter-spacing:0.35px;">% variation</div>
<div class="" style="left:394.2px;top:148.3px;width:14.4px;height:14.4px;background:#c6c6c6;border:1px solid #9a9a9a;box-sizing:border-box;border-radius:1.5px;"></div>
<div class="t" style="left:419.34px;top:147px;height:17px;line-height:17px;font-size:15.40px;color:#000;letter-spacing:0.27px;">From initial value</div>
<div class="" style="left:23px;top:170.2px;width:524px;height:23.8px;background:#c0c0c0;"></div>
<div class="" style="left:23.5px;top:174.3px;width:14.4px;height:14.4px;background:#fff;border:1px solid #9a9a9a;box-sizing:border-box;border-radius:1.5px;"></div>
<div class="t" style="left:48.10px;top:173px;height:17px;line-height:17px;font-size:15.40px;color:#000;letter-spacing:0.41px;">Fix Gaussian widths</div>
<div class="" style="left:232.2px;top:174.3px;width:14.4px;height:14.4px;background:#fff;border:1px solid #9a9a9a;box-sizing:border-box;border-radius:1.5px;"></div>
<div class="t" style="left:257.77px;top:173px;height:17px;line-height:17px;font-size:15.40px;color:#000;letter-spacing:0.35px;">% variation</div>
<div class="" style="left:394.2px;top:174.3px;width:14.4px;height:14.4px;background:#fff;border:1px solid #9a9a9a;box-sizing:border-box;border-radius:1.5px;"></div>
<div class="t" style="left:419.34px;top:173px;height:17px;line-height:17px;font-size:15.40px;color:#000;letter-spacing:0.27px;">From initial value</div>
<div class="" style="left:23px;top:196.3px;width:524px;height:23.9px;background:#c0c0c0;"></div>
<div class="" style="left:23.5px;top:200.45px;width:14.4px;height:14.4px;background:#fff;border:1px solid #9a9a9a;box-sizing:border-box;border-radius:1.5px;"></div>
<div class="t" style="left:48.09px;top:199px;height:17px;line-height:17px;font-size:15.40px;color:#000;letter-spacing:0.38px;">Fix Gaussian amplitudes</div>
<div class="" style="left:232.2px;top:200.45px;width:14.4px;height:14.4px;background:#fff;border:1px solid #9a9a9a;box-sizing:border-box;border-radius:1.5px;"></div>
<div class="t" style="left:257.77px;top:199px;height:17px;line-height:17px;font-size:15.40px;color:#000;letter-spacing:0.35px;">% variation</div>
<div class="" style="left:394.2px;top:200.45px;width:14.4px;height:14.4px;background:#fff;border:1px solid #9a9a9a;box-sizing:border-box;border-radius:1.5px;"></div>
<div class="t" style="left:419.34px;top:199px;height:17px;line-height:17px;font-size:15.40px;color:#000;letter-spacing:0.27px;">From initial value</div>
<div class="" style="left:344.1px;top:143.1px;width:49.9px;height:26.6px;background:#c3c3c3;border:1px solid #9e9e9e;border-bottom:2px solid #8e8e8e;box-sizing:border-box;border-radius:4px;"></div>
<div class="t" style="left:364.08px;top:148px;height:16px;line-height:16px;font-size:14.80px;color:#000;letter-spacing:-0.35px;">5</div>
<div class="" style="left:344.1px;top:169.1px;width:49.9px;height:26.6px;background:#c3c3c3;border:1px solid #9e9e9e;border-bottom:2px solid #8e8e8e;box-sizing:border-box;border-radius:4px;"></div>
<div class="t" style="left:364.08px;top:174px;height:16px;line-height:16px;font-size:14.80px;color:#000;letter-spacing:-0.35px;">5</div>
<div class="" style="left:344.1px;top:195.2px;width:49.9px;height:26.7px;background:#c3c3c3;border:1px solid #9e9e9e;border-bottom:2px solid #8e8e8e;box-sizing:border-box;border-radius:4px;"></div>
<div class="t" style="left:364.08px;top:200px;height:16px;line-height:16px;font-size:14.80px;color:#000;letter-spacing:-0.35px;">5</div>
<div class="" style="left:23px;top:220.7px;width:209px;height:102px;background:#000;"></div>
<div class="" style="left:232px;top:221.7px;width:315px;height:23.6px;background:#c0c0c0;"></div>
<div class="" style="left:232.4px;top:225.4px;width:14.4px;height:14.4px;background:#fff;border:1px solid #9a9a9a;box-sizing:border-box;border-radius:1.5px;"></div>
<div class="t" style="left:257.73px;top:224px;height:16px;line-height:16px;font-size:14.80px;color:#000;letter-spacing:-0.35px;">1</div>
<div class="" style="left:311.5px;top:225.4px;width:14.4px;height:14.4px;background:#fff;border:1px solid #9a9a9a;box-sizing:border-box;border-radius:1.5px;"></div>
<div class="t" style="left:336.43px;top:224px;height:16px;line-height:16px;font-size:14.80px;color:#000;letter-spacing:-0.35px;">2</div>
<div class="" style="left:390.4px;top:225.4px;width:14.4px;height:14.4px;background:#fff;border:1px solid #9a9a9a;box-sizing:border-box;border-radius:1.5px;"></div>
<div class="t" style="left:415.73px;top:224px;height:16px;line-height:16px;font-size:14.80px;color:#000;letter-spacing:-0.35px;">3</div>
<div class="" style="left:468.2px;top:225.4px;width:14.4px;height:14.4px;background:#fff;border:1px solid #9a9a9a;box-sizing:border-box;border-radius:1.5px;"></div>
<div class="t" style="left:492.83px;top:224px;height:16px;line-height:16px;font-size:14.80px;color:#000;letter-spacing:-0.35px;">4</div>
<div class="t" style="left:121.42px;top:226px;height:16px;line-height:16px;font-size:14.20px;color:#fff;letter-spacing:0.23px;font-weight:bold;">Fix Gaussians:</div>
<div class="t" style="left:169.60px;top:251px;height:16px;line-height:16px;font-size:14.20px;color:#fff;font-weight:bold;">Epsilon:</div>
<div class="t" style="left:152.42px;top:277px;height:16px;line-height:16px;font-size:14.20px;color:#fff;letter-spacing:0.43px;font-weight:bold;">Iterations:</div>
<div class="t" style="left:113.63px;top:303px;height:16px;line-height:16px;font-size:14.20px;color:#fff;letter-spacing:0.46px;font-weight:bold;">Maximum calls:</div>
<div class="" style="left:232.1px;top:244.8px;width:314.5px;height:26.4px;background:#fff;border:1px solid #9a9a9a;box-sizing:border-box;border-radius:3px;border-bottom:1.4px solid #868686;"></div>
<div class="t" style="left:341.84px;top:249px;height:17px;line-height:17px;font-size:15.40px;color:#000;letter-spacing:1.27px;">0.00018088</div>
<div class="" style="left:232.1px;top:271.2px;width:314.5px;height:26.1px;background:#fff;border:1px solid #9a9a9a;box-sizing:border-box;border-radius:3px;border-bottom:1.4px solid #868686;"></div>
<div class="t" style="left:376.02px;top:275px;height:17px;line-height:17px;font-size:15.40px;color:#000;letter-spacing:0.64px;">100</div>
<div class="" style="left:232.1px;top:297.3px;width:314.5px;height:25.9px;background:#fff;border:1px solid #9a9a9a;box-sizing:border-box;border-radius:3px;border-bottom:1.4px solid #868686;"></div>
<div class="t" style="left:376.02px;top:301px;height:17px;line-height:17px;font-size:15.40px;color:#000;letter-spacing:0.64px;">100</div>
<div class="b" style="left:23px;top:327px;width:262px;height:25.6px;"></div>
<div class="t" style="left:70.45px;top:331px;height:17px;line-height:17px;font-size:15.40px;color:#000;letter-spacing:0.31px;">Restore to initial values</div>
<div class="b" style="left:285px;top:327px;width:262px;height:25.6px;"></div>
<div class="t" style="left:397.27px;top:331px;height:17px;line-height:17px;font-size:15.40px;color:#000;letter-spacing:0.15px;">Undo</div>
<div class="b" style="left:23px;top:357px;width:131px;height:25.6px;background:linear-gradient(#58f4fc,#40dcec);border-color:#2a7ab0;"></div>
<div class="t" style="left:77.80px;top:361px;height:17px;line-height:17px;font-size:15.05px;color:#000;">LM</div>
<div class="b" style="left:154px;top:357px;width:131px;height:25.6px;"></div>
<div class="t" style="left:195.20px;top:361px;height:17px;line-height:17px;font-size:15.10px;color:#000;">GS SD</div>
<div class="b" style="left:285px;top:357px;width:131px;height:25.6px;"></div>
<div class="t" style="left:330.30px;top:361px;height:17px;line-height:17px;font-size:14.99px;color:#000;">GS IH</div>
<div class="b" style="left:416px;top:357px;width:131px;height:25.6px;"></div>
<div class="t" style="left:457.30px;top:361px;height:17px;line-height:17px;font-size:14.99px;color:#000;">GS CG</div>
<div class="" style="left:23.3px;top:387px;width:443.7px;height:25.8px;background:#fff;border:1px solid #9a9a9a;box-sizing:border-box;border-radius:3px;"></div>
<div class="b" style="left:467px;top:387px;width:80px;height:25.6px;"></div>
<div class="t" style="left:490.40px;top:391px;height:17px;line-height:17px;font-size:15.40px;color:#ff0000;letter-spacing:0.41px;">Stop</div>
<div class="b" style="left:23px;top:417px;width:262px;height:26px;"></div>
<div class="t" style="left:137.90px;top:422px;height:17px;line-height:17px;font-size:15.40px;color:#000;">Help</div>
<div class="b" style="left:285px;top:417px;width:262px;height:26px;"></div>
<div class="t" style="left:396.50px;top:422px;height:16px;line-height:16px;font-size:14.90px;color:#000;">Close</div>
<svg style="position:absolute;left:0px;top:0px" width="30" height="28" viewBox="0 0 30 28"><circle cx="13.2" cy="6.4" r="2.32" fill="#f0f"/><circle cx="15.1" cy="7.4" r="2.44" fill="#1a8a5a"/><circle cx="18.3" cy="9.6" r="2.07" fill="#f00"/><circle cx="12.1" cy="9.8" r="1.59" fill="#f00"/><circle cx="10" cy="10.8" r="1.95" fill="#ff0"/><circle cx="16.6" cy="10.4" r="2.07" fill="#ff0"/><circle cx="7.9" cy="14.5" r="2.81" fill="#ff0"/><circle cx="12.3" cy="13" r="2.20" fill="#0ff"/><circle cx="15.5" cy="13.4" r="1.83" fill="#ff0"/><circle cx="18.7" cy="13.8" r="2.07" fill="#f00"/><circle cx="21.3" cy="15.5" r="1.95" fill="#f00"/><circle cx="23.4" cy="15.8" r="1.59" fill="#00f"/><circle cx="13.2" cy="16.2" r="1.34" fill="#f90"/><circle cx="16.6" cy="15.5" r="1.46" fill="#0ff"/><circle cx="10.6" cy="17.6" r="1.71" fill="#00f"/><circle cx="8.5" cy="17.9" r="1.46" fill="#ff0"/><circle cx="15.7" cy="17.4" r="1.59" fill="#f00"/><circle cx="18.5" cy="18.5" r="2.20" fill="#f00"/><circle cx="21.5" cy="18.7" r="1.10" fill="#f90"/><circle cx="13.2" cy="19.8" r="2.56" fill="#1a8a5a"/><circle cx="16.2" cy="20.8" r="1.34" fill="#f90"/><circle cx="20.8" cy="20.6" r="1.59" fill="#0dd"/><circle cx="24.4" cy="21.5" r="2.81" fill="#ff0"/><circle cx="18.5" cy="23" r="2.20" fill="#f00"/><circle cx="12.3" cy="23.2" r="2.44" fill="#ff0"/><circle cx="16.2" cy="23.8" r="1.46" fill="#00f"/><circle cx="21.3" cy="23" r="1.22" fill="#46f"/></svg>
<svg style="position:absolute;left:20.2px;top:80.2px" width="30" height="28" viewBox="0 0 30 28"><circle cx="13.2" cy="6.4" r="2.32" fill="#f0f"/><circle cx="15.1" cy="7.4" r="2.44" fill="#1a8a5a"/><circle cx="18.3" cy="9.6" r="2.07" fill="#f00"/><circle cx="12.1" cy="9.8" r="1.59" fill="#f00"/><circle cx="10" cy="10.8" r="1.95" fill="#ff0"/><circle cx="16.6" cy="10.4" r="2.07" fill="#ff0"/><circle cx="7.9" cy="14.5" r="2.81" fill="#ff0"/><circle cx="12.3" cy="13" r="2.20" fill="#0ff"/><circle cx="15.5" cy="13.4" r="1.83" fill="#ff0"/><circle cx="18.7" cy="13.8" r="2.07" fill="#f00"/><circle cx="21.3" cy="15.5" r="1.95" fill="#f00"/><circle cx="23.4" cy="15.8" r="1.59" fill="#00f"/><circle cx="13.2" cy="16.2" r="1.34" fill="#f90"/><circle cx="16.6" cy="15.5" r="1.46" fill="#0ff"/><circle cx="10.6" cy="17.6" r="1.71" fill="#00f"/><circle cx="8.5" cy="17.9" r="1.46" fill="#ff0"/><circle cx="15.7" cy="17.4" r="1.59" fill="#f00"/><circle cx="18.5" cy="18.5" r="2.20" fill="#f00"/><circle cx="21.5" cy="18.7" r="1.10" fill="#f90"/><circle cx="13.2" cy="19.8" r="2.56" fill="#1a8a5a"/><circle cx="16.2" cy="20.8" r="1.34" fill="#f90"/><circle cx="20.8" cy="20.6" r="1.59" fill="#0dd"/><circle cx="24.4" cy="21.5" r="2.81" fill="#ff0"/><circle cx="18.5" cy="23" r="2.20" fill="#f00"/><circle cx="12.3" cy="23.2" r="2.44" fill="#ff0"/><circle cx="16.2" cy="23.8" r="1.46" fill="#00f"/><circle cx="21.3" cy="23" r="1.22" fill="#46f"/></svg>
<svg style="position:absolute;left:1118px;top:0px" width="96" height="30" viewBox="0 0 96 30"><g fill="none" stroke="#aaaaaa">
<path d="M11.9 19V12.5" stroke-width="2"/><path d="M8.3 15.6L11.9 12L15.5 15.6" stroke-width="1.9"/><path d="M31 18H37" stroke-width="2"/>
<path d="M52.5 12.5V18.5H59.4V12.5" stroke-width="1"/><path d="M52 12.1H59.9" stroke-width="2"/><path d="M73.6 10.8L82.1 19.3M82.1 10.8L73.6 19.3" stroke-width="1.6"/></g></svg>
</body></html>
